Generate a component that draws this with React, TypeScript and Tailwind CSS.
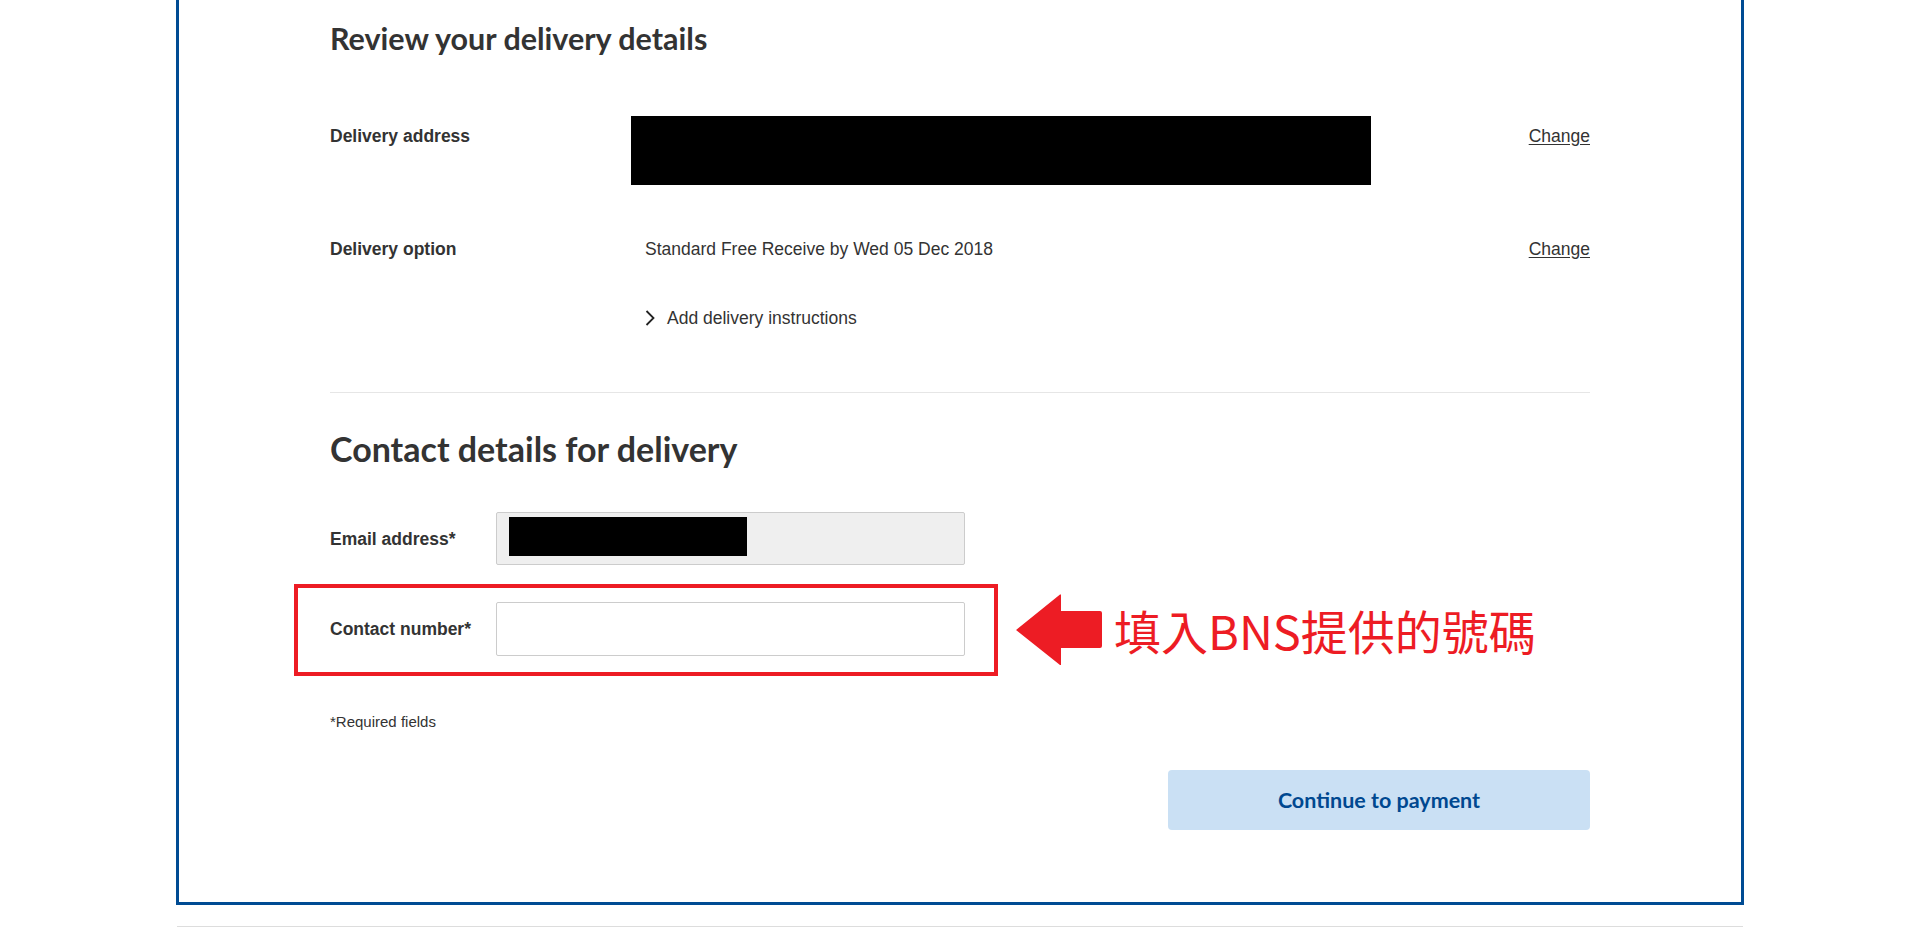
import { ReactNode } from 'react'

const headingFont = { fontFamily: 'Lato, "Noto Sans", sans-serif' }

function SectionHeading({ children, className = '' }: { children: ReactNode; className?: string }) {
  return (
    <h2 style={headingFont} className={`leading-[40px] font-bold text-[#333] ${className}`}>
      {children}
    </h2>
  )
}

function ChangeLink() {
  return (
    <a href="#" className="text-[17.5px] leading-[22px] text-[#333] underline underline-offset-2">
      Change
    </a>
  )
}

function Chevron() {
  return (
    <svg width="10" height="16" viewBox="0 0 10 16" className="shrink-0">
      <polyline points="1.5,1 8.5,8 1.5,15" fill="none" stroke="#222" strokeWidth="1.8" />
    </svg>
  )
}

function RedArrow() {
  return (
    <svg width="88" height="72" viewBox="0 0 88 72" className="shrink-0">
      <path
        d="M0 36 L44 0.5 L45 0.5 L45 17 L84 17 Q86 17 86 19 L86 52 Q86 54 84 54 L45 54 L45 71 L44 71 Z"
        fill="#ed1c24"
      />
    </svg>
  )
}

export default function App() {
  return (
    <div
      className="min-h-screen w-full bg-white text-[#333]"
      style={{ fontFamily: '"Liberation Sans", Arial, sans-serif' }}
    >
      <div className="mx-auto w-[1568px] border-x-[3px] border-b-[3px] border-[#004b93] px-[151px] pt-[18px] pb-[72px]">
        {/* Review section */}
        <SectionHeading className="text-[30.5px]">Review your delivery details</SectionHeading>

        <div className="mt-[58px] flex items-start">
          <div className="w-[315px] pt-[9px] text-[17.5px] leading-[22px] font-bold">Delivery address</div>
          <div className="flex-1">
            <div className="-ml-[14px] h-[69px] w-[740px] bg-black" />
          </div>
          <div className="pt-[9px]">
            <ChangeLink />
          </div>
        </div>

        <div className="mt-[53px] flex items-start">
          <div className="w-[315px] text-[17.5px] leading-[22px] font-bold">Delivery option</div>
          <div className="flex-1">
            <p className="text-[17.5px] leading-[22px]">Standard Free Receive by Wed 05 Dec 2018</p>
            <button className="mt-[47px] flex items-center gap-[12px] text-[17.5px] leading-[22px] text-[#333]">
              <Chevron />
              Add delivery instructions
            </button>
          </div>
          <ChangeLink />
        </div>

        <div className="mt-[63px] h-px bg-[#e6e6e6]" />

        {/* Contact section */}
        <SectionHeading className="mt-[36px] text-[34px]">Contact details for delivery</SectionHeading>

        <div className="mt-[43px] flex items-center">
          <label className="w-[166px] text-[17.5px] leading-[22px] font-bold">Email address*</label>
          <div className="h-[53px] w-[469px] rounded-[2px] border border-[#ccc] bg-[#efefef] pl-[12px] pt-[4px]">
            <div className="h-[39px] w-[238px] bg-black" />
          </div>
        </div>

        <div className="mt-[19px] flex items-center">
          <div className="-ml-[36px] flex w-[704px] items-center border-4 border-[#ed1c24] pl-[32px] pt-[14px] pb-[16px]">
            <label className="w-[166px] text-[17.5px] leading-[22px] font-bold">Contact number*</label>
            <input
              type="text"
              className="h-[54px] w-[469px] rounded-[2px] border border-[#ccc] bg-white px-3 outline-none"
            />
          </div>
          <div className="ml-[18px]">
            <RedArrow />
          </div>
          <span
            className="ml-[10px] text-[47px] leading-[56px] font-normal text-[#ed1c24]"
            style={{ fontFamily: '"Noto Sans CJK TC", "Noto Sans", sans-serif' }}
          >
            填入BNS提供的號碼
          </span>
        </div>

        <p className="mt-[37px] text-[15px] leading-[18px]">*Required fields</p>

        <div className="mt-[39px] flex justify-end">
          <button
            style={headingFont}
            className="h-[60px] w-[422px] rounded-[4px] bg-[#cae0f4] text-[21.5px] font-bold text-[#004890]"
          >
            Continue to payment
          </button>
        </div>
      </div>

      <div className="mx-auto mt-[21px] h-px w-[1566px] bg-[#ddd]" />
    </div>
  )
}
